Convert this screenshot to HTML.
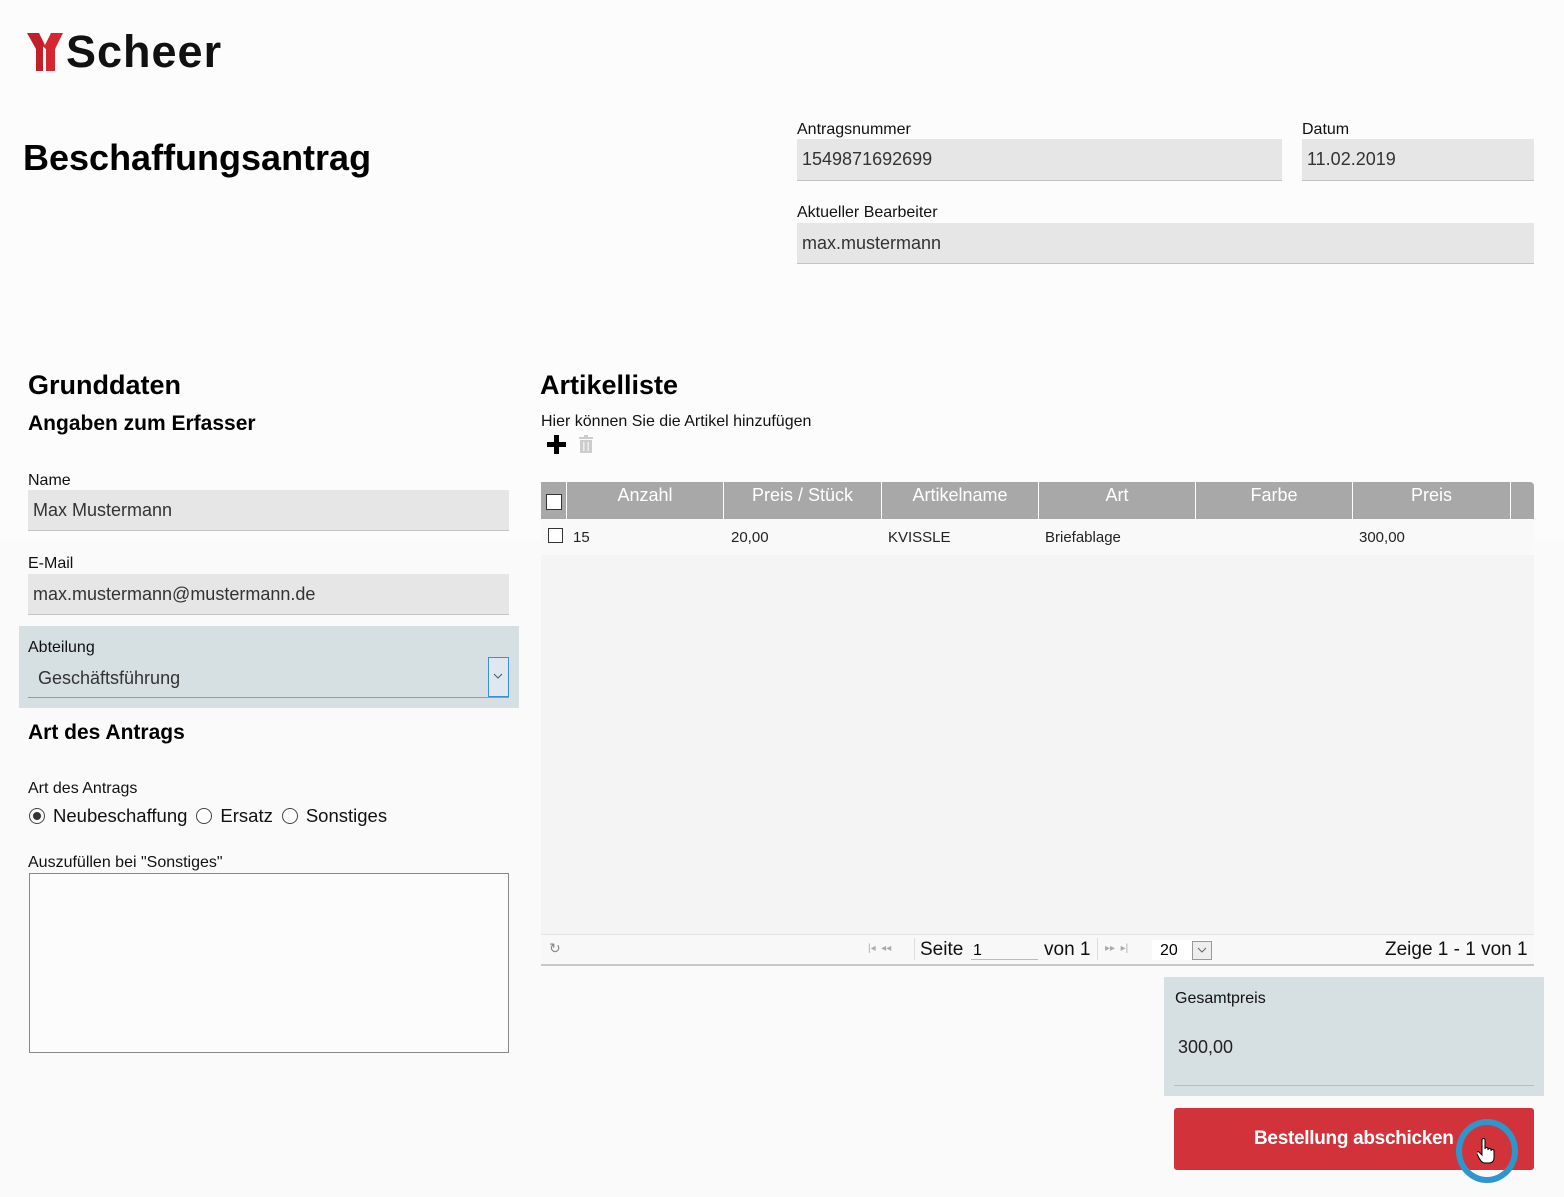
<!DOCTYPE html>
<html><head><meta charset="utf-8"><style>
*{box-sizing:border-box;margin:0;padding:0}
body{width:1564px;height:1197px;background:#fcfcfc;font-family:"Liberation Sans",Arial,sans-serif;position:relative;overflow:hidden;color:#000}
.a{position:absolute}
.lbl{font-size:16px;color:#111}
.inp{position:absolute;background:#e6e6e6;border-bottom:1px solid #c4c4c4;font-size:18px;color:#333;padding-left:5px;display:flex;align-items:center}
.h2{font-size:27px;font-weight:bold}
.h3{font-size:21px;font-weight:bold}
.th{position:absolute;top:482px;height:37px;color:#fff;font-size:18px;text-align:center;padding-top:3px;border-right:1px solid #fff}
.td{position:absolute;top:529px;font-size:15px;color:#222}
.radio{display:inline-block;width:16px;height:16px;border:1px solid #444;border-radius:50%;vertical-align:-2px;position:relative;background:#fff;margin:0 8px 0 9px}
</style></head><body>
<div class="a" style="left:0;top:540px;width:1564px;height:657px;background:#fafafa"></div>

<!-- logo -->
<svg class="a" style="left:27px;top:33px" width="36" height="38" viewBox="0 0 36 38">
<path d="M0 0h12l6 12 6-12h12l-8 16v22h-9v-22z" fill="#d6262f"/>
<path d="M0 0h12l4 10v28h-7v-22z" fill="#c21f28"/>
</svg>
<div class="a" style="left:66px;top:26px;font-size:45px;font-weight:bold;color:#111;letter-spacing:1px">Scheer</div>

<div class="a" style="left:23px;top:137px;font-size:36px;font-weight:bold">Beschaffungsantrag</div>

<div class="a lbl" style="left:797px;top:121px">Antragsnummer</div>
<div class="inp" style="left:797px;top:139px;width:485px;height:42px">1549871692699</div>
<div class="a lbl" style="left:1302px;top:121px">Datum</div>
<div class="inp" style="left:1302px;top:139px;width:232px;height:42px">11.02.2019</div>
<div class="a lbl" style="left:797px;top:204px">Aktueller Bearbeiter</div>
<div class="inp" style="left:797px;top:223px;width:737px;height:41px">max.mustermann</div>

<!-- left -->
<div class="a h2" style="left:28px;top:370px">Grunddaten</div>
<div class="a h3" style="left:28px;top:412px">Angaben zum Erfasser</div>
<div class="a lbl" style="left:28px;top:472px">Name</div>
<div class="inp" style="left:28px;top:490px;width:481px;height:41px">Max Mustermann</div>
<div class="a lbl" style="left:28px;top:555px">E-Mail</div>
<div class="inp" style="left:28px;top:574px;width:481px;height:41px">max.mustermann@mustermann.de</div>

<div class="a" style="left:19px;top:626px;width:500px;height:82px;background:#d6dfe1"></div>
<div class="a lbl" style="left:28px;top:639px">Abteilung</div>
<div class="a" style="left:38px;top:668px;font-size:18px;color:#333">Geschäftsführung</div>
<div class="a" style="left:28px;top:697px;width:481px;height:1px;background:#999"></div>
<div class="a" style="left:488px;top:657px;width:21px;height:40px;border:1px solid #3a8fd6;background:#dfe8ef"></div>
<svg class="a" style="left:493px;top:673px" width="10" height="6" viewBox="0 0 10 6"><path d="M1 1l4 4 4-4" stroke="#555" fill="none"/></svg>

<div class="a h3" style="left:28px;top:721px">Art des Antrags</div>
<div class="a lbl" style="left:28px;top:780px">Art des Antrags</div>
<div class="a" style="left:29px;top:805px;font-size:18.5px;color:#111">
<span class="radio" style="margin-left:0"><span style="position:absolute;left:3px;top:3px;width:8px;height:8px;border-radius:50%;background:#333"></span></span>Neubeschaffung<span class="radio"></span>Ersatz<span class="radio"></span>Sonstiges</div>
<div class="a lbl" style="left:28px;top:854px">Auszufüllen bei "Sonstiges"</div>
<div class="a" style="left:29px;top:873px;width:480px;height:180px;border:1px solid #888;background:#fcfcfc"></div>

<!-- right -->
<div class="a h2" style="left:540px;top:370px">Artikelliste</div>
<div class="a lbl" style="left:541px;top:413px">Hier können Sie die Artikel hinzufügen</div>
<svg class="a" style="left:547px;top:435px" width="19" height="19" viewBox="0 0 19 19"><path d="M7 0h5v7h7v5h-7v7h-5v-7h-7v-5h7z" fill="#000"/></svg>
<svg class="a" style="left:578px;top:435px" width="16" height="18" viewBox="0 0 16 18"><rect x="1" y="2" width="14" height="2" fill="#ccc"/><rect x="6" y="0" width="4" height="2" fill="#ccc"/><rect x="2" y="5" width="12" height="13" fill="#ccc"/><rect x="5" y="7" width="1.5" height="9" fill="#eee"/><rect x="9.5" y="7" width="1.5" height="9" fill="#eee"/></svg>

<div class="a" style="left:541px;top:482px;width:993px;height:37px;background:#a8a8a8;border-radius:0 4px 0 0"></div>
<div class="a" style="left:541px;top:482px;width:26px;height:37px;border-right:1px solid #fff"></div>
<div class="a" style="left:546px;top:494px;width:16px;height:16px;border:1px solid #333;background:#fff"></div>
<div class="th" style="left:567px;width:157px">Anzahl</div>
<div class="th" style="left:724px;width:158px">Preis / Stück</div>
<div class="th" style="left:882px;width:157px">Artikelname</div>
<div class="th" style="left:1039px;width:157px">Art</div>
<div class="th" style="left:1196px;width:157px">Farbe</div>
<div class="th" style="left:1353px;width:158px">Preis</div>
<div class="a" style="left:541px;top:519px;width:993px;height:36px;background:#f9f9f9"></div>
<div class="a" style="left:548px;top:528px;width:15px;height:15px;border:1px solid #333;background:#fff"></div>
<div class="td" style="left:573px">15</div>
<div class="td" style="left:731px">20,00</div>
<div class="td" style="left:888px">KVISSLE</div>
<div class="td" style="left:1045px">Briefablage</div>
<div class="td" style="left:1359px">300,00</div>
<div class="a" style="left:541px;top:555px;width:993px;height:380px;background:#f4f4f4"></div>

<div class="a" style="left:541px;top:934px;width:993px;height:32px;background:#f8f8f8;border-top:1px solid #e4e4e4;border-bottom:2px solid #c8c8c8"></div>
<div class="a" style="left:549px;top:940px;font-size:14px;color:#888">&#8635;</div>
<div class="a" style="left:868px;top:943px;font-size:10px;color:#aaa">|◂ &nbsp;◂◂</div>
<div class="a" style="left:914px;top:938px;width:1px;height:22px;background:#ddd"></div>
<div class="a" style="left:920px;top:939px;font-size:19px;color:#111">Seite</div>
<div class="a" style="left:971px;top:940px;width:67px;height:20px;border-bottom:1px solid #bbb;font-size:16px;padding:2px">1</div>
<div class="a" style="left:1044px;top:939px;font-size:19px;color:#111">von 1</div>
<div class="a" style="left:1097px;top:938px;width:1px;height:22px;background:#ddd"></div>
<div class="a" style="left:1105px;top:943px;font-size:10px;color:#aaa">▸▸ &nbsp;▸|</div>
<div class="a" style="left:1152px;top:940px;width:60px;height:20px;background:#fff;font-size:16px;padding:2px 8px">20</div>
<div class="a" style="left:1192px;top:941px;width:20px;height:19px;border:1px solid #999;background:#eee"></div>
<svg class="a" style="left:1197px;top:947px" width="10" height="6" viewBox="0 0 10 6"><path d="M1 1l4 4 4-4" stroke="#666" fill="none"/></svg>
<div class="a" style="left:1385px;top:939px;font-size:19px;color:#111">Zeige 1 - 1 von 1</div>

<div class="a" style="left:1164px;top:977px;width:380px;height:119px;background:#d6dfe1"></div>
<div class="a lbl" style="left:1175px;top:990px">Gesamtpreis</div>
<div class="a" style="left:1178px;top:1037px;font-size:18px;color:#222">300,00</div>
<div class="a" style="left:1174px;top:1085px;width:360px;height:1px;background:#bbb"></div>

<div class="a" style="left:1174px;top:1108px;width:360px;height:62px;background:#d2333a;border-radius:3px"></div>
<div class="a" style="left:1254px;top:1128px;color:#fff;font-size:19px;font-weight:bold;letter-spacing:-0.3px">Bestellung abschicken</div>
<div class="a" style="left:1456px;top:1119px;width:62px;height:64px;border:6px solid #2e96cc;border-radius:50%"></div>
<svg class="a" style="left:1477px;top:1138px" width="18" height="26" viewBox="0 0 18 26"><path d="M5 2c0-2 3-2 3 0v9c0-2 3-2 3 0v1c0-2 3-2 3 0v1c0-2 3-2 3 0v7c0 3-2 5-5 5h-4c-3 0-4-2-6-5l-2-4c-1-2 1-3 2-2l3 3z" fill="#fff" stroke="#000" stroke-width="1"/></svg>
</body></html>
